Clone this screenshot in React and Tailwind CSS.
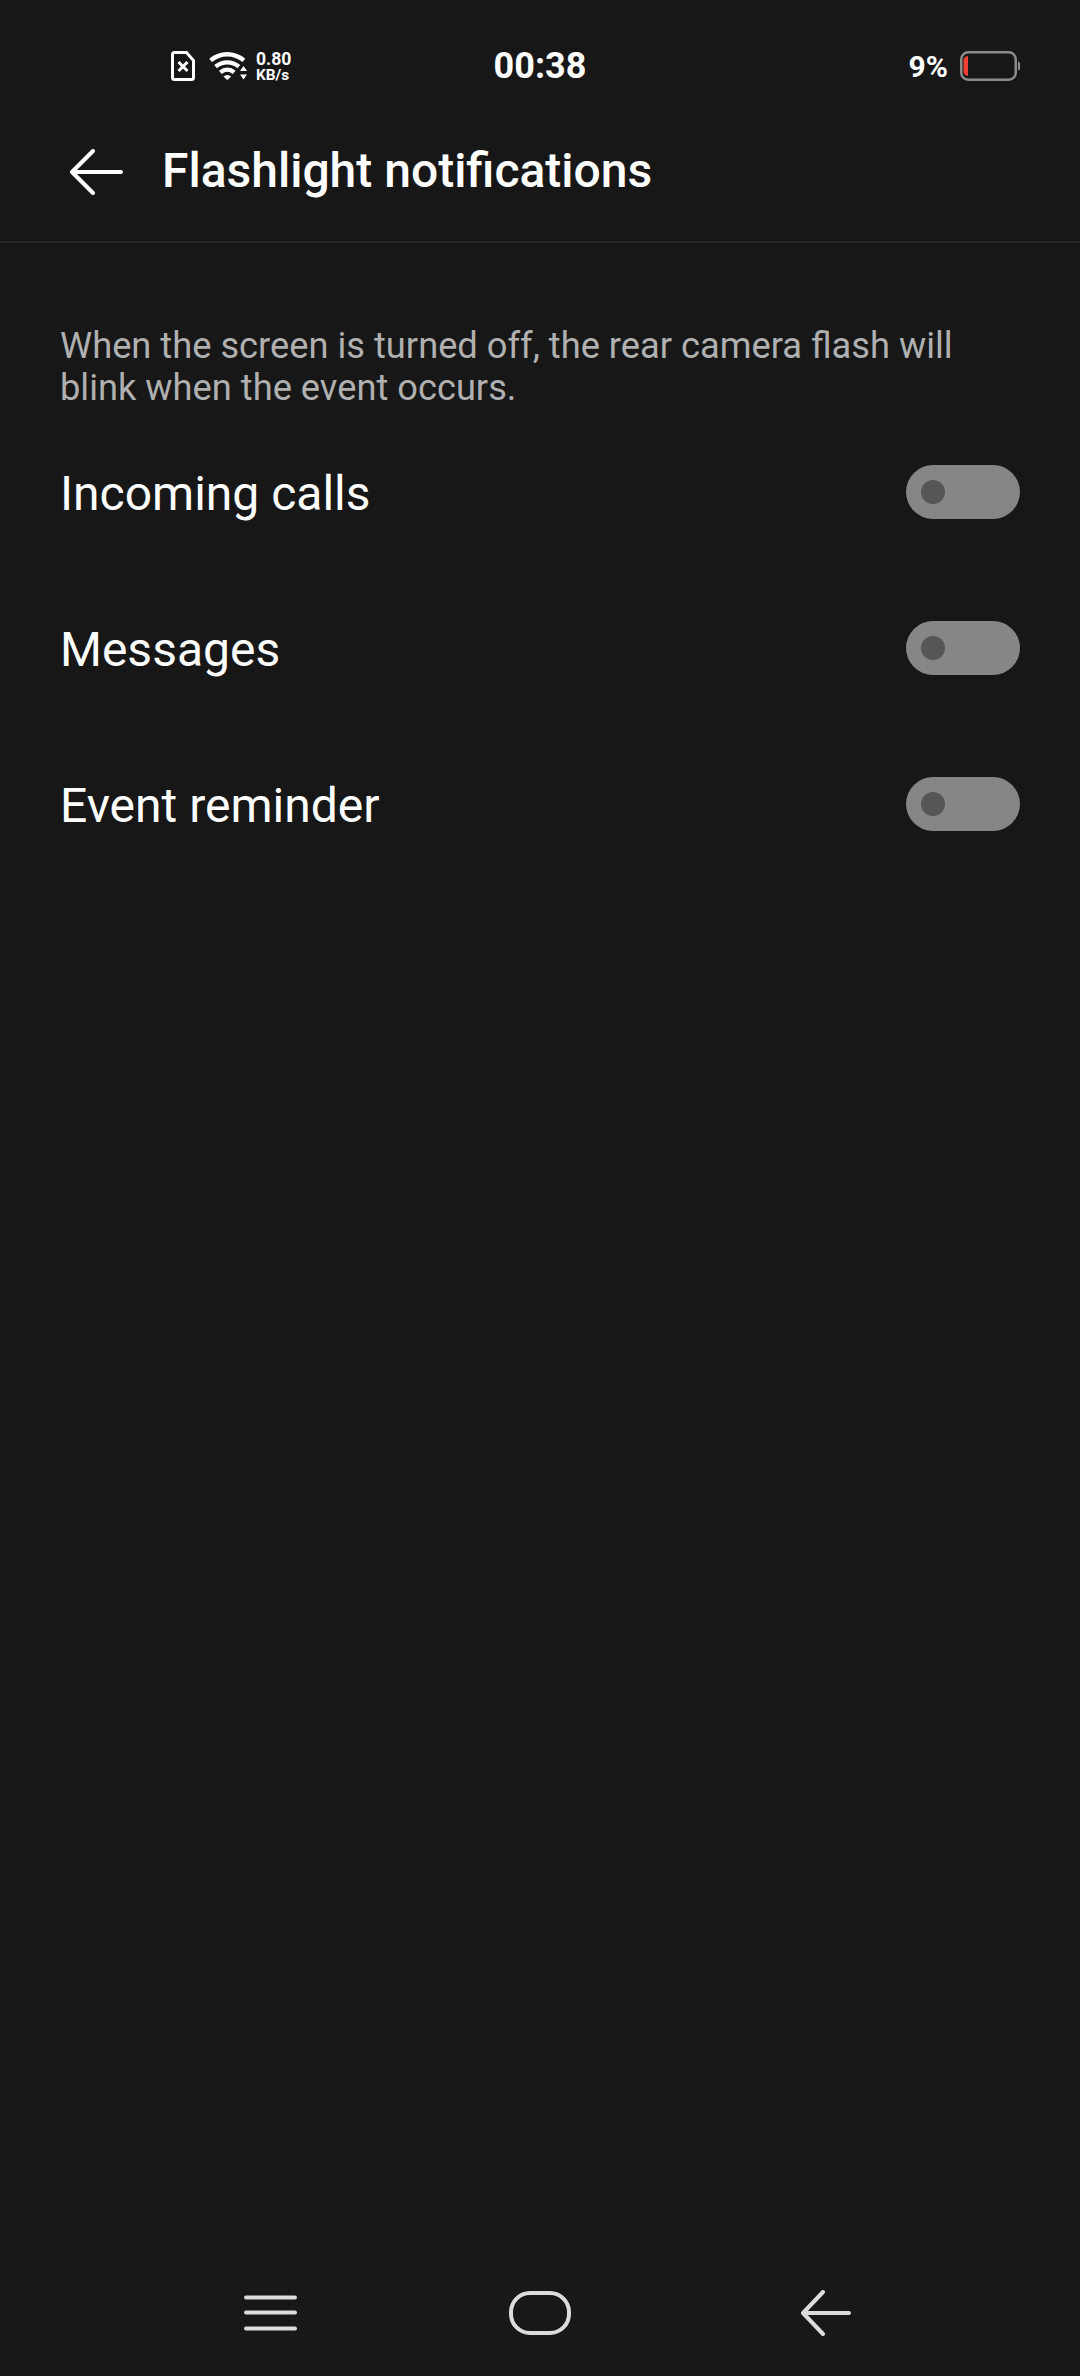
import React, { useState } from 'react';

const SETTINGS = [
  { id: 'calls', label: 'Incoming calls' },
  { id: 'messages', label: 'Messages' },
  { id: 'reminder', label: 'Event reminder' },
];

const SimIcon = () => (
  <svg className="w-[24px] h-[30px]" viewBox="0 0 24 30" fill="none" stroke="#fff">
    <path
      d="M3.5 1.5H15.5L22.5 9.5V26.5Q22.5 28.5 20.5 28.5H3.5Q1.5 28.5 1.5 26.5V3.5Q1.5 1.5 3.5 1.5Z"
      strokeWidth="3"
    />
    <path d="M7.5 11L16.5 20M16.5 11L7.5 20" strokeWidth="3" />
  </svg>
);

const WifiIcon = () => (
  <svg className="w-[39px] h-[28px]" viewBox="0 0 39 28" fill="none">
    <g stroke="#fff" strokeWidth="4.3">
      <path d="M1.6 8.4C11.5 0.2 25 0.2 34.9 8.4" />
      <path d="M6.6 14.6C13.5 9 23 9 29.9 14.6" />
      <path d="M11.4 20.4C15.8 16.8 21 16.8 25.2 20.4" />
    </g>
    <path d="M14.4 24.4Q18.3 21.4 22.2 24.4L18.3 28Z" fill="#fff" />
    <path d="M31 19L34.5 14L38 19Z" fill="#fff" />
    <path d="M31 22.4H38L34.5 27.4Z" fill="#fff" />
  </svg>
);

const BatteryIcon = () => (
  <svg className="w-[60px] h-[30px]" viewBox="0 0 60 30" fill="none">
    <rect x="1.25" y="1.25" width="54.5" height="27.5" rx="7" stroke="#8b8b8b" strokeWidth="2.5" />
    <path d="M58 10.5Q60 10.5 60 12.5V17.5Q60 19.5 58 19.5Z" fill="#8b8b8b" />
    <path d="M8 5V25Q3.5 24.5 3.5 20V10Q3.5 5.5 8 5Z" fill="#ee4035" />
  </svg>
);

const StatusBar = () => (
  <div className="relative flex items-center justify-between h-[132px] pl-[171px] pr-[60px] text-white font-bold">
    <div className="flex items-center">
      <SimIcon />
      <div className="ml-[14px] h-[28px]">
        <WifiIcon />
      </div>
      <div className="ml-[8px] pt-[2px] flex flex-col">
        <span className="text-[17.6px] leading-[16px]">0.80</span>
        <span className="text-[15.4px] leading-[16px]">KB/s</span>
      </div>
    </div>
    <span className="absolute left-0 right-0 text-center text-[36px] leading-[42px]">00:38</span>
    <div className="flex items-center gap-[12px]">
      <span className="pt-px text-[30px] leading-[36px]">9%</span>
      <BatteryIcon />
    </div>
  </div>
);

const Toggle = ({ checked, onChange }) => (
  <button
    type="button"
    role="switch"
    aria-checked={checked}
    onClick={onChange}
    className={`flex items-center w-[114px] h-[54px] px-[15px] rounded-full bg-[#868686] ${
      checked ? 'justify-end' : 'justify-start'
    }`}
  >
    <span className="w-[24px] h-[24px] rounded-full bg-[#565656]" />
  </button>
);

const App = () => {
  const [enabled, setEnabled] = useState({});

  const toggle = (id) => {
    setEnabled((prev) => ({ ...prev, [id]: !prev[id] }));
  };

  return (
    <div className="flex flex-col w-[1080px] h-[2376px] overflow-hidden bg-[#171717] font-['Roboto',sans-serif]">
      <StatusBar />

      {/* Title bar */}
      <header className="flex items-center h-[111px] pl-[69px] pb-[29px] border-b-2 border-[#252525]">
        <svg
          className="w-[54px] h-[46px]"
          viewBox="0 0 54 46"
          fill="none"
          stroke="#fff"
          strokeWidth="4"
          strokeLinecap="round"
          strokeLinejoin="round"
        >
          <path d="M24 2L3 23L24 44M3 23H52" />
        </svg>
        <h1 className="ml-[39px] pb-[3px] text-[48px] leading-[56px] font-medium text-white">
          Flashlight notifications
        </h1>
      </header>

      <main className="flex-1 px-[60px] pt-[82px]">
        <p className="text-[36.25px] leading-[42px] text-[#b0b0b0]">
          When the screen is turned off, the rear camera flash will
          <br />
          blink when the event occurs.
        </p>
        <div className="mt-[5px]">
          {SETTINGS.map((item) => (
            <div key={item.id} className="flex items-center justify-between h-[156px]">
              <span className="pt-[3px] text-[48px] leading-[56px] text-white">{item.label}</span>
              <Toggle checked={!!enabled[item.id]} onChange={() => toggle(item.id)} />
            </div>
          ))}
        </div>
      </main>

      {/* Navigation bar */}
      <nav className="flex items-center h-[127px] pl-[244px] bg-[#181818]">
        <svg className="w-[53px] h-[36px]" viewBox="0 0 53 36" stroke="#dcdcdc" strokeWidth="4" strokeLinecap="round">
          <path d="M2 2.5H51M2 17.5H51M2 33.5H51" />
        </svg>
        <span className="ml-[212px] w-[62px] h-[44px] rounded-[21px] border-4 border-[#dcdcdc]" />
        <svg
          className="ml-[229px] w-[52px] h-[46px]"
          viewBox="0 0 52 46"
          fill="none"
          stroke="#dcdcdc"
          strokeWidth="4"
          strokeLinecap="round"
          strokeLinejoin="round"
        >
          <path d="M23 2L3 23L23 44M3 23H49" />
        </svg>
      </nav>
    </div>
  );
};

export default App;
